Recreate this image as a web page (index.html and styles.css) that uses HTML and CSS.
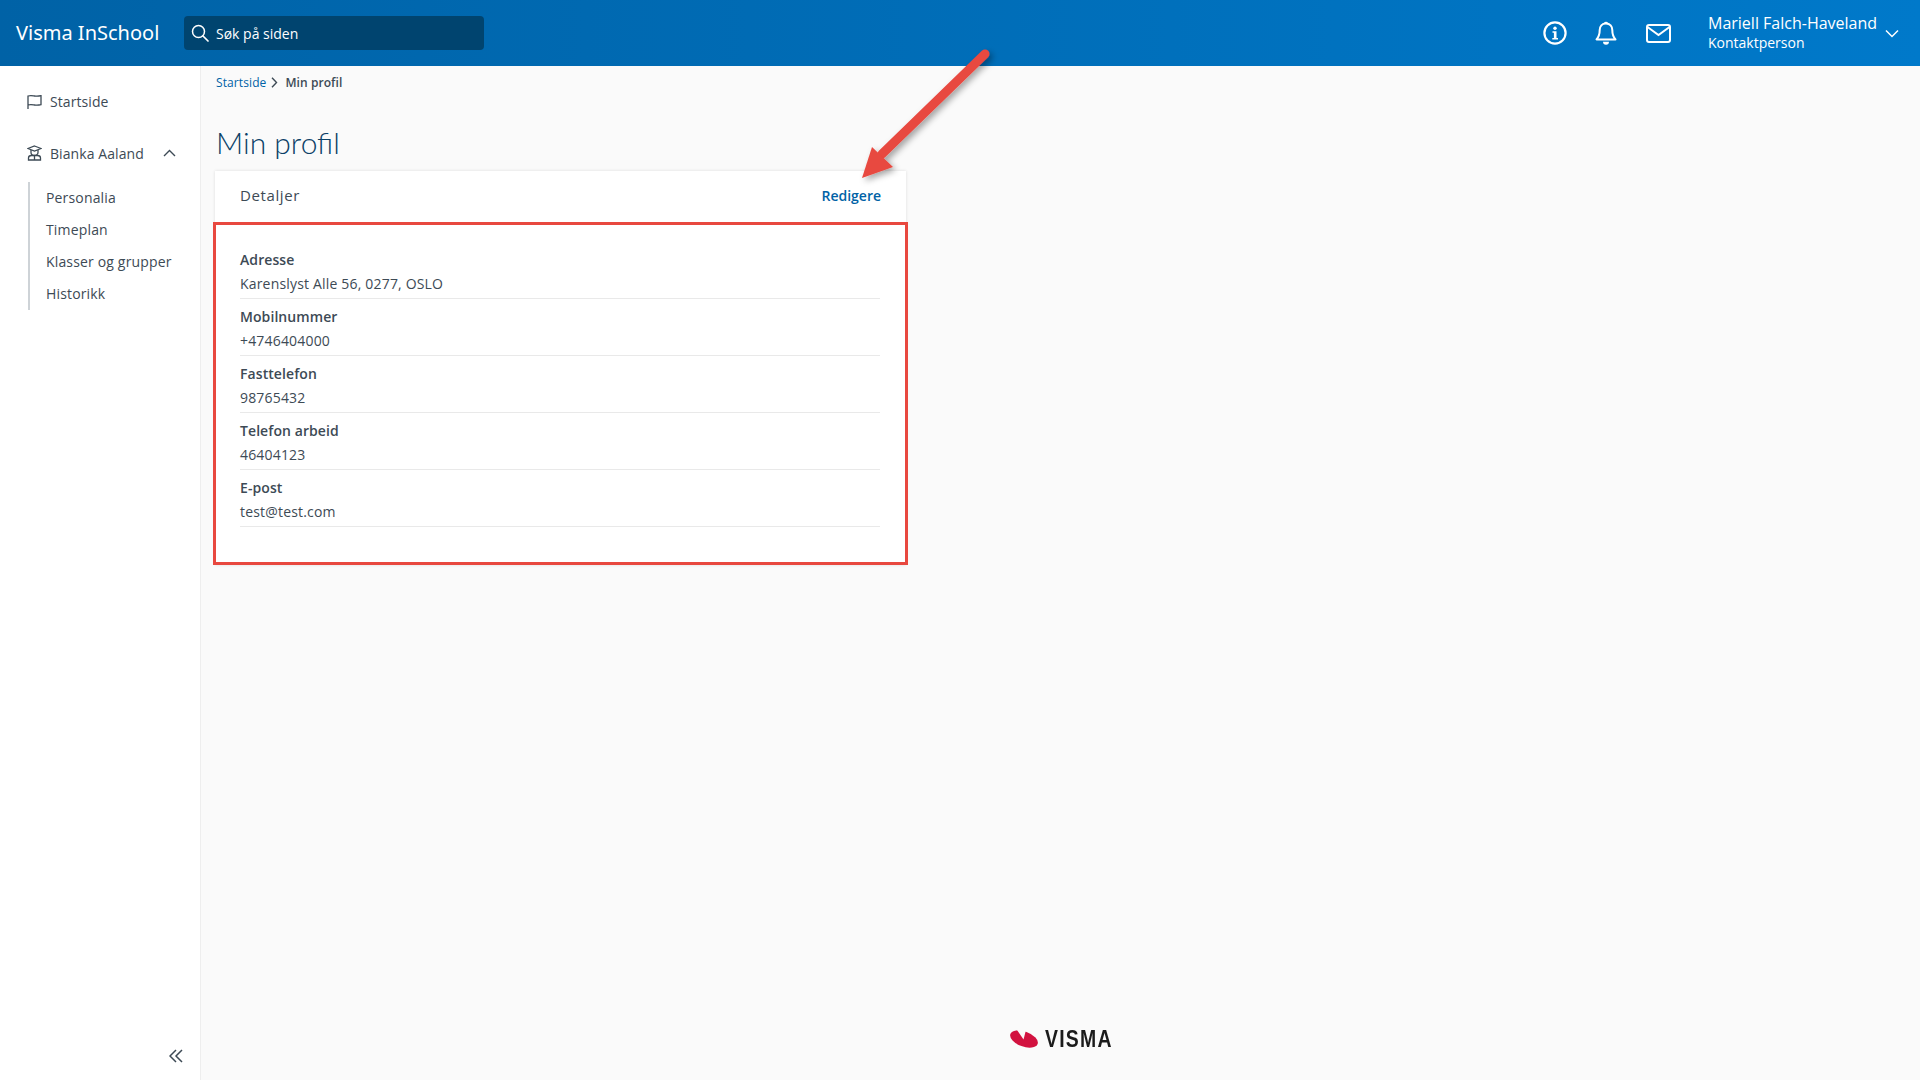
FILE: index.html
```html
<!DOCTYPE html>
<html lang="no">
<head>
<meta charset="utf-8">
<title>Min profil</title>
<link rel="stylesheet" href="styles.css">
</head>
<body>
<header class="topbar">
  <div class="brand">Visma InSchool</div>
  <div class="search">
    <svg class="search-icon" width="18" height="18" viewBox="0 0 18 18"><circle cx="7.5" cy="7.5" r="6" fill="none" stroke="#fff" stroke-width="1.5"/><path d="M12 12l5 5" stroke="#fff" stroke-width="1.7" stroke-linecap="round"/></svg>
    <span>Søk på siden</span>
  </div>
  <div class="top-actions">
    <svg class="ti-info" width="24" height="24" viewBox="0 0 24 24"><circle cx="12" cy="12" r="10.6" fill="none" stroke="#fff" stroke-width="2.200"/><circle cx="12" cy="7.300" r="1.700" fill="#fff"/><path d="M9.500 10.300h4v6.700h1.500v1.500H9.300V17h1.600v-5.200H9.500z" fill="#fff"/></svg>
    <svg class="ti-bell" width="22" height="25" viewBox="0 0 22 25"><path d="M11 2.500c-4 0-6.300 2.800-6.300 6.600 0 5-1 7-3.200 9.300h19c-2.200-2.300-3.200-4.300-3.200-9.300 0-3.800-2.300-6.600-6.300-6.600z" fill="none" stroke="#fff" stroke-width="2" stroke-linejoin="round"/><path d="M9.700 2.500a1.400 1.400 0 0 1 2.600 0" fill="none" stroke="#fff" stroke-width="1.800"/><path d="M8 20.800h6a3 3 0 0 1-6 0z" fill="#fff"/></svg>
    <svg class="ti-mail" width="25" height="19" viewBox="0 0 25 19"><rect x="1" y="1" width="23" height="17" rx="2" fill="none" stroke="#fff" stroke-width="2"/><path d="M1.500 3l11 8 11-8" fill="none" stroke="#fff" stroke-width="2"/></svg>
    <div class="user">
      <div class="user-name">Mariell Falch-Haveland</div>
      <div class="user-role">Kontaktperson</div>
    </div>
    <svg class="ti-caret" width="14" height="9" viewBox="0 0 14 9"><path d="M1 1.500l6 6 6-6" fill="none" stroke="#fff" stroke-width="1.500"/></svg>
  </div>
</header>
<div class="shell">
  <aside class="sidebar">
    <nav class="nav">
      <div class="nav-item">
        <svg width="15" height="15" viewBox="0 0 15 15"><path d="M1 15V1.500M1 2c2.500-.8 3.500-.5 6.500 0s4 .3 6.500-.3v9c-2.500.6-3.500.8-6.500.3S3.500 10.200 1 11" fill="none" stroke="#3d4a55" stroke-width="1.300"/></svg>
        <span>Startside</span>
      </div>
      <div class="nav-item nav-group">
        <svg width="15" height="16" viewBox="0 0 15 16"><path d="M7.500 1L14 3.500 7.500 6 1 3.500z" fill="none" stroke="#3d4a55" stroke-width="1.200"/><path d="M4 5v2.500a3.500 3 0 0 0 7 0V5" fill="none" stroke="#3d4a55" stroke-width="1.300"/><path d="M1.500 15v-2c0-1.700 1.500-2.500 3-2.500h6c1.500 0 3 .8 3 2.500v2z" fill="none" stroke="#3d4a55" stroke-width="1.300"/><path d="M7.500 10.500V15" stroke="#3d4a55" stroke-width="1.300"/></svg>
        <span>Bianka Aaland</span>
        <svg class="nav-caret" width="13" height="8" viewBox="0 0 13 8"><path d="M1 7l5.500-5.500L12 7" fill="none" stroke="#3d4a55" stroke-width="1.400"/></svg>
      </div>
      <ul class="subnav">
        <li>Personalia</li>
        <li>Timeplan</li>
        <li>Klasser og grupper</li>
        <li>Historikk</li>
      </ul>
    </nav>
    <svg class="collapse" width="14" height="14" viewBox="0 0 14 14"><path d="M7 1L1 7l6 6M13 1L7 7l6 6" fill="none" stroke="#3d4a55" stroke-width="1.500"/></svg>
  </aside>
  <main class="content">
    <div class="crumbs">
      <a class="crumb-link">Startside</a>
      <svg width="7" height="11" viewBox="0 0 7 11"><path d="M1 .8l4.500 4.700L1 10.200" fill="none" stroke="#3d4a55" stroke-width="1.400"/></svg>
      <span class="crumb-current">Min profil</span>
    </div>
    <h1 class="title">Min profil</h1>
    <section class="card">
      <div class="card-head">
        <h2>Detaljer</h2>
        <a class="edit">Redigere</a>
      </div>
      <div class="fields">
        <div class="field"><div class="label">Adresse</div><div class="value">Karenslyst Alle 56, 0277, OSLO</div></div>
        <div class="field"><div class="label">Mobilnummer</div><div class="value">+4746404000</div></div>
        <div class="field"><div class="label">Fasttelefon</div><div class="value">98765432</div></div>
        <div class="field"><div class="label">Telefon arbeid</div><div class="value">46404123</div></div>
        <div class="field"><div class="label">E-post</div><div class="value">test@test.com</div></div>
      </div>
      <div class="highlight"></div>
    </section>
    <footer class="foot">
      <svg class="logo-mark" width="28" height="18" viewBox="0 0 28 18"><ellipse cx="14" cy="9" rx="14.500" ry="7.500" transform="rotate(20 14 9)" fill="#d2123f"/><path d="M7 0l6.500 9.500L16 0z" fill="#fafafa"/></svg>
      <span class="logo-text">VISMA</span>
    </footer>
  </main>
</div>
<svg class="arrow" width="150" height="150" viewBox="0 0 150 150">
  <defs><filter id="ds" x="-20%" y="-20%" width="140%" height="140%"><feDropShadow dx="3" dy="3" stdDeviation="3" flood-color="#000" flood-opacity=".35"/></filter></defs>
  <g filter="url(#ds)">
    <path d="M135 14L32 114" stroke="#e8483f" stroke-width="9" stroke-linecap="round"/>
    <path d="M12 138L22 107 43 127z" fill="#e8483f"/>
  </g>
</svg>
</body>
</html>
```
FILE: styles.css
```css
* { box-sizing: border-box; }
html, body { margin: 0; height: 100%; }
body {
  font-family: "Open Sans", "Noto Sans", sans-serif;
  font-size: 14px;
  color: #3d4a55;
  background: #fafafa;
  overflow: hidden;
  position: relative;
}
.topbar {
  height: 66px;
  background: linear-gradient(90deg, #0062a6 0%, #0079ca 100%);
  display: flex;
  align-items: center;
  padding-left: 16px;
  color: #fff;
}
.brand {
  width: 168px;
  font-size: 20px;
  font-family: "Noto Sans", sans-serif;
  margin-top: -1px;
}
.search {
  width: 300px;
  height: 34px;
  border-radius: 4px;
  background: #00446f;
  display: flex;
  align-items: center;
  gap: 7px;
  padding-left: 7px;
  font-size: 14px;
}
.top-actions {
  margin-left: auto;
  display: flex;
  align-items: center;
  padding-right: 21px;
}
.ti-info { margin-right: 28px; }
.ti-bell { margin-right: 29px; }
.ti-mail { margin-right: 37px; }
.user { width: 177px; line-height: 20px; }
.user-name { font-size: 16px; }
.user-role { font-size: 14px; }
.shell { display: flex; height: 1014px; }
.sidebar {
  width: 201px;
  background: #fff;
  border-right: 1px solid #eeeeee;
  display: flex;
  flex-direction: column;
  padding-right: 17px;
}
.nav { padding-top: 24px; flex: 1; }
.nav-item {
  display: flex;
  align-items: center;
  gap: 8px;
  height: 22px;
  padding-left: 27px;
  white-space: nowrap;
  letter-spacing: .08px;
}
.nav-group { margin-top: 30px; position: relative; }
.nav-caret { margin-left: 11px; flex: none; }
.subnav {
  list-style: none;
  margin: 18px 0 0 28px;
  padding: 0 0 0 16px;
  border-left: 2px solid #ced3d7;
  height: 128px;
}
.subnav li { height: 32px; line-height: 32px; white-space: nowrap; letter-spacing: .16px; }
.collapse { align-self: flex-end; margin-bottom: 17px; }
.content { flex: 1; padding-left: 15px; display: flex; flex-direction: column; }
.crumbs {
  display: flex;
  align-items: center;
  height: 32px;
  font-size: 12px;
}
.crumb-link { color: #0062a6; margin-right: 5px; letter-spacing: .1px; }
.crumb-current { margin-left: 7px; font-weight: 600; letter-spacing: .08px; }
.title {
  margin: 25px 0 0;
  font-family: "Lato", "Noto Sans", sans-serif;
  font-weight: 300;
  font-size: 30px;
  line-height: 38px;
  height: 48px;
  color: #0b4167;
}
.card {
  width: 691px;
  height: 394px;
  margin-left: -1px;
  background: #fff;
  position: relative;
  box-shadow: 0 0 3px rgba(0, 0, 0, .12);
  padding: 0 26px 0 25px;
}
.card-head {
  height: 51px;
  display: flex;
  align-items: center;
  justify-content: space-between;
  padding-bottom: 3px;
}
.card-head h2 { margin: 0; font-size: 15px; font-weight: 400; letter-spacing: .6px; }
.edit { color: #0062a6; font-weight: 600; font-size: 14px; padding-top: 1px; margin-right: -1px; }
.fields { padding-top: 20px; }
.field { height: 57px; padding-top: 6px; border-bottom: 1px solid #e9e9e9; }
.label { font-weight: 600; line-height: 24px; letter-spacing: .08px; }
.value { line-height: 24px; letter-spacing: .18px; }
.highlight {
  position: absolute;
  left: -2px;
  top: 51px;
  width: 695px;
  height: 343px;
  border: 3px solid #e8483f;
  pointer-events: none;
}
.foot {
  margin-top: auto;
  display: flex;
  align-items: center;
  gap: 7px;
  height: 40px;
  margin-bottom: 21px;
  padding-left: 794px;
}
.logo-text {
  display: block;
  font-family: "Liberation Sans", sans-serif;
  font-weight: 700;
  font-size: 24px;
  line-height: 24px;
  color: #1b1b1b;
  letter-spacing: 1.5px;
  transform: scaleX(.81);
  transform-origin: left center;
}
.arrow { position: absolute; left: 850px; top: 40px; }
```
